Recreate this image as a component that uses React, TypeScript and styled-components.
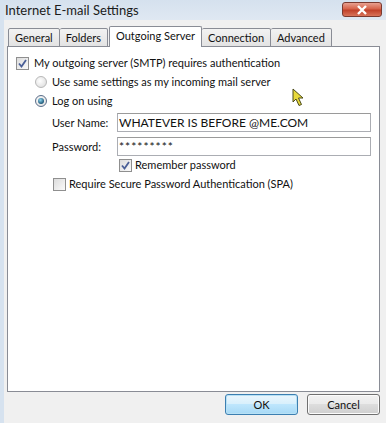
import React from "react"
import styled, { createGlobalStyle } from "styled-components"

const GlobalStyle = createGlobalStyle`
	html, body {
		margin: 0;
		padding: 0;
		background: #f0f0f0;
	}
	body {
		font-family: Lato, "Open Sans", "DejaVu Sans", sans-serif;
		font-size: 11px;
		color: #111;
	}
`

const tabs = ["General", "Folders", "Outgoing Server", "Connection", "Advanced"]

const Check: React.FC<{ checked?: boolean }> = ({ checked }) => (
	<CheckBox>
		{checked && (
			<svg width="9" height="9" viewBox="0 0 9 9">
				<path d="M1 4.5 L3.5 7.5 L8 1" fill="none" stroke="#4a5f97" strokeWidth="1.8" />
			</svg>
		)}
	</CheckBox>
)

const Radio: React.FC<{ checked?: boolean }> = ({ checked }) => (
	<RadioDot checked={checked}>{checked && <RadioInner />}</RadioDot>
)

export default function App() {
	return (
		<>
			<GlobalStyle />
			<Window>
				<TitleBar>
					<Title>Internet E-mail Settings</Title>
					<CloseButton>
						<svg width="12" height="10" viewBox="0 0 12 10">
							<path d="M2 1 L10 9 M10 1 L2 9" stroke="#fff" strokeWidth="2.4" />
						</svg>
					</CloseButton>
				</TitleBar>
				<Body>
					<TabStrip>
						{tabs.map((t) => (
							<Tab key={t} active={t === "Outgoing Server"}>
								{t}
							</Tab>
						))}
					</TabStrip>
					<Panel>
						<Row indent={0} gap={5}>
							<Check checked />
							<Label>My outgoing server (SMTP) requires authentication</Label>
						</Row>
						<Row indent={19} gap={5}>
							<Radio />
							<Label>Use same settings as my incoming mail server</Label>
						</Row>
						<Row indent={19} gap={5}>
							<Radio checked />
							<Label>Log on using</Label>
						</Row>
						<FieldGrid>
							<FieldLabel>User Name:</FieldLabel>
							<TextBox>WHATEVER IS BEFORE @ME.COM</TextBox>
							<FieldLabel>Password:</FieldLabel>
							<TextBox masked>*********</TextBox>
						</FieldGrid>
						<Row indent={103} gap={3}>
							<Check checked />
							<Label>Remember password</Label>
						</Row>
						<Row indent={37} gap={3}>
							<Check />
							<Label>Require Secure Password Authentication (SPA)</Label>
						</Row>
						<Cursor>
							<svg width="14" height="19" viewBox="0 0 14 19">
								<path
									d="M1 1 L1 14 L4 11 L7 17.5 L9.5 16.5 L6.5 10 L11 10 Z"
									fill="#e8d93a"
									stroke="#4a4a1a"
									strokeWidth="1"
									strokeLinejoin="round"
								/>
							</svg>
						</Cursor>
					</Panel>
					<Footer>
						<Button primary>OK</Button>
						<Button>Cancel</Button>
					</Footer>
				</Body>
			</Window>
		</>
	)
}

const Window = styled.div`
	position: relative;
	width: 386px;
	height: 423px;
	display: flex;
	flex-direction: column;
	background: #f0f0f0;
	border-left: 4px solid #d6e2ef;
	box-sizing: border-box;
	overflow: hidden;
`

const TitleBar = styled.div`
	height: 20px;
	margin-left: -4px;
	padding-left: 5px;
	display: flex;
	align-items: center;
	justify-content: space-between;
	background: linear-gradient(#d5e1ee, #dfe8f2);
`

const Title = styled.div`
	font-size: 13px;
	color: #1b1b1b;
	margin-top: -1px;
`

const CloseButton = styled.div`
	width: 40px;
	height: 15px;
	margin-right: 4px;
	margin-top: -1px;
	border-radius: 3px;
	border: 1px solid #7a3a30;
	box-sizing: border-box;
	display: flex;
	align-items: center;
	justify-content: center;
	background: linear-gradient(#e8a090 0%, #d6634a 45%, #c0412a 55%, #d8735a 100%);
`

const Body = styled.div`
	flex: 1;
	display: flex;
	flex-direction: column;
	padding: 6px 6px 0 3px;
`

const TabStrip = styled.div`
	display: flex;
	align-items: flex-end;
	height: 21px;
	padding-left: 1px;
	position: relative;
	z-index: 1;
	margin-bottom: -1px;
`

const Tab = styled.div<{ active?: boolean }>`
	box-sizing: border-box;
	height: ${(p) => (p.active ? "21px" : "19px")};
	padding: 0 ${(p) => (p.active ? "6px" : "6px")};
	margin-left: ${(p) => (p.active ? "1px" : "0")};
	display: flex;
	align-items: center;
	border: 1px solid #898c95;
	border-bottom: ${(p) => (p.active ? "none" : "1px solid #898c95")};
	border-left: ${(p) => (p.active ? "1px solid #898c95" : "none")};
	background: ${(p) => (p.active ? "#fff" : "linear-gradient(#f2f2f2, #e3e3e3)")};
	border-radius: 2px 2px 0 0;
	padding-bottom: ${(p) => (p.active ? "3px" : "0")};
	position: relative;
	z-index: ${(p) => (p.active ? 2 : 1)};

	&:first-child {
		border-left: 1px solid #898c95;
	}
`

const Panel = styled.div`
	position: relative;
	height: 346px;
	box-sizing: border-box;
	background: #fff;
	border: 1px solid #898c95;
	padding: 10px 8px 0 8px;
	display: flex;
	flex-direction: column;
`

const Row = styled.div<{ indent: number; gap: number }>`
	display: flex;
	align-items: center;
	height: 12px;
	margin-left: ${(p) => p.indent}px;
	margin-bottom: 7px;
	gap: ${(p) => p.gap}px;
`

const Label = styled.span`
	white-space: nowrap;
	line-height: 12px;
`

const CheckBox = styled.div`
	width: 13px;
	height: 13px;
	box-sizing: border-box;
	border: 1px solid #8f8f8f;
	background: linear-gradient(135deg, #dcdcdc, #fafafa);
	display: flex;
	align-items: center;
	justify-content: center;
	flex-shrink: 0;
`

const RadioDot = styled.div<{ checked?: boolean }>`
	width: 12px;
	height: 12px;
	box-sizing: border-box;
	border-radius: 50%;
	border: 1px solid ${(p) => (p.checked ? "#5b6e8a" : "#b8b8b8")};
	background: radial-gradient(circle at 40% 40%, #ffffff, #d8d8d8);
	display: flex;
	align-items: center;
	justify-content: center;
	flex-shrink: 0;
`

const RadioInner = styled.div`
	width: 6px;
	height: 6px;
	border-radius: 50%;
	background: radial-gradient(circle at 40% 35%, #8fd6f0, #1f5878 70%);
`

const FieldGrid = styled.div`
	display: grid;
	grid-template-columns: 65px 254px;
	row-gap: 5px;
	align-items: center;
	margin-left: 36px;
	margin-top: -1px;
	margin-bottom: 3px;
`

const FieldLabel = styled.span`
	white-space: nowrap;
`

const TextBox = styled.div<{ masked?: boolean }>`
	height: 19px;
	box-sizing: border-box;
	border: 1px solid #abadb3;
	border-top-color: #9a9a9a;
	background: #fff;
	padding: 0 1px;
	display: flex;
	align-items: center;
	white-space: nowrap;
	font-size: 12px;
	letter-spacing: ${(p) => (p.masked ? "1px" : "0")};
`

const Cursor = styled.div`
	position: absolute;
	left: 284px;
	top: 41px;
	line-height: 0;
`

const Footer = styled.div`
	display: flex;
	justify-content: flex-end;
	gap: 9px;
	padding-top: 2px;
`

const Button = styled.div<{ primary?: boolean }>`
	width: 73px;
	height: 21px;
	box-sizing: border-box;
	border-radius: 3px;
	border: 1px solid ${(p) => (p.primary ? "#3c7fb1" : "#707070")};
	box-shadow: inset 0 0 0 1px ${(p) => (p.primary ? "#b8e1f5" : "#fcfcfc")};
	background: ${(p) =>
		p.primary
			? "linear-gradient(#eaf6fd 0%, #d9f0fc 45%, #bee6fd 50%, #a7d9f5 100%)"
			: "linear-gradient(#f2f2f2 0%, #ebebeb 45%, #dddddd 50%, #cfcfcf 100%)"};
	display: flex;
	align-items: center;
	justify-content: center;
`
